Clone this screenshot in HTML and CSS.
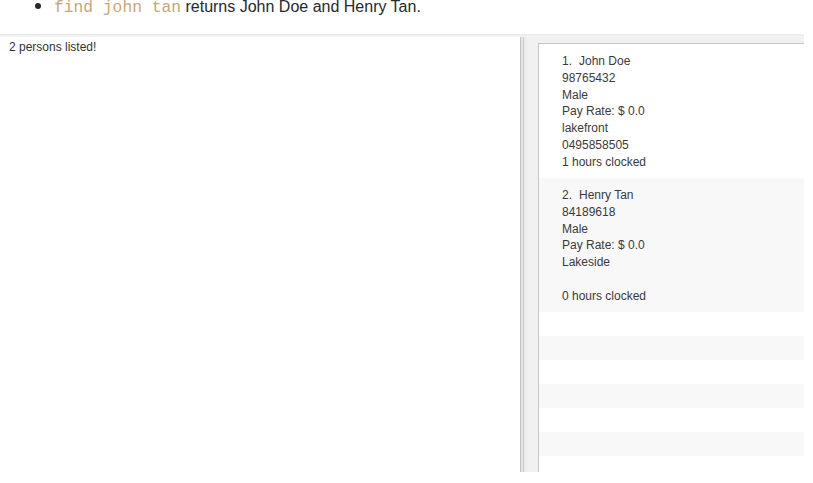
FILE: index.html
```html
<!DOCTYPE html>
<html>
<head>
<meta charset="utf-8">
<link rel="stylesheet" href="styles.css">
</head>
<body>
<ul class="doc">
  <li><code class="cmd">find john tan</code> returns John Doe and Henry Tan.</li>
</ul>
<div class="app">
  <div class="topstrip"></div>
  <div class="main">
    <div class="left">
      <div class="result">2 persons listed!</div>
    </div>
    <div class="divider"></div>
    <div class="right">
      <div class="list">
        <div class="card">
          <div class="line"><span class="idx">1.</span>John Doe</div>
          <div class="line">98765432</div>
          <div class="line">Male</div>
          <div class="line">Pay Rate: $ 0.0</div>
          <div class="line">lakefront</div>
          <div class="line">0495858505</div>
          <div class="line">1 hours clocked</div>
        </div>
        <div class="card alt">
          <div class="line"><span class="idx">2.</span>Henry Tan</div>
          <div class="line">84189618</div>
          <div class="line">Male</div>
          <div class="line">Pay Rate: $ 0.0</div>
          <div class="line">Lakeside</div>
          <div class="line"></div>
          <div class="line">0 hours clocked</div>
        </div>
        <div class="row"></div>
        <div class="row alt"></div>
        <div class="row"></div>
        <div class="row alt"></div>
        <div class="row"></div>
        <div class="row alt"></div>
        <div class="row"></div>
      </div>
    </div>
  </div>
</div>
</body>
</html>
```

FILE: styles.css
```css
html, body {
  margin: 0;
  padding: 0;
  background: #ffffff;
  overflow: hidden;
}
body {
  width: 813px;
  height: 483px;
  font-family: "Liberation Sans", Arial, sans-serif;
}
.doc {
  margin: -7px 0 0 0;
  padding: 0 0 0 54px;
  list-style: disc;
  font-size: 16px;
  line-height: 24px;
  color: #24292e;
  height: 41px;
  box-sizing: border-box;
}
.doc li::marker {
  font-size: 20px;
}
.cmd {
  font-family: "Liberation Mono", "DejaVu Sans Mono", monospace;
  font-size: 16.3px;
  color: #c9a676;
}
.app {
  width: 804px;
  height: 438px;
  display: flex;
  flex-direction: column;
}
.topstrip {
  height: 3px;
  background: linear-gradient(#e9e9e9, #f4f4f4);
  flex: none;
}
.main {
  flex: 1;
  display: flex;
  min-height: 0;
}
.left {
  width: 520px;
  flex: none;
  background: #ffffff;
}
.result {
  padding: 3px 0 0 9px;
  font-size: 12px;
  line-height: 14px;
  color: #333333;
}
.divider {
  width: 7px;
  flex: none;
  background: linear-gradient(90deg, #c4c4c4 0, #c4c4c4 1px, #e4e4e4 1px, #e4e4e4 3px, #cdcdcd 3px, #cdcdcd 4px, #ececec 4px, #ececec 7px);
}
.right {
  flex: 1;
  background: #f1f1f1;
  padding: 6px 0 0 11px;
  display: flex;
  min-width: 0;
}
.list {
  flex: 1;
  background: #ffffff;
  border-top: 1px solid #c6c6c6;
  border-left: 1px solid #c6c6c6;
  display: flex;
  flex-direction: column;
  overflow: hidden;
}
.card {
  height: 134px;
  box-sizing: border-box;
  padding: 9px 0 0 23px;
  flex: none;
  font-size: 12px;
  line-height: 16.75px;
  color: #3a3a3a;
}
.line {
  height: 16.75px;
  white-space: nowrap;
}
.idx {
  margin-right: 7px;
}
.alt {
  background: #f8f8f8;
}
.row {
  height: 24px;
  flex: none;
}
```
